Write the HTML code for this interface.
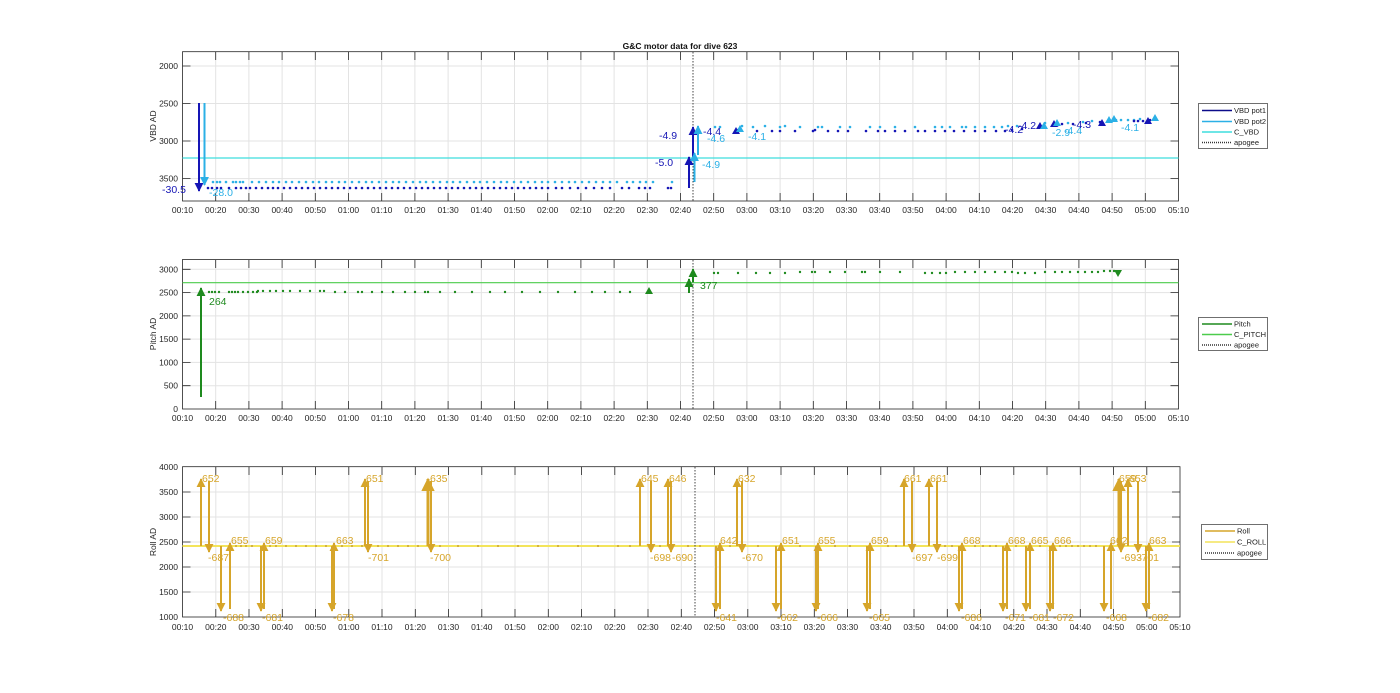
<!DOCTYPE html>
<html><head><meta charset="utf-8"><style>
html,body{margin:0;padding:0;background:#fff;width:1400px;height:693px;overflow:hidden}
svg{display:block;font-family:"Liberation Sans",Arial,sans-serif}
.tk{font-size:8.5px;fill:#262626}
.g{stroke:#e3e3e3;stroke-width:1}
.ax{fill:none;stroke:#262626;stroke-width:0.8}
.r{font-size:10.5px;fill:#d6a52a}
</style></head><body>
<svg width="1400" height="693" viewBox="0 0 1400 693" xmlns="http://www.w3.org/2000/svg">
<defs>
<marker id="mDB" viewBox="0 0 10 10" refX="9" refY="5" markerWidth="4.5" markerHeight="4.5" orient="auto"><path d="M0,0L10,5L0,10z" fill="#1515b5"/></marker>
<marker id="mLB" viewBox="0 0 10 10" refX="9" refY="5" markerWidth="4.5" markerHeight="4.5" orient="auto"><path d="M0,0L10,5L0,10z" fill="#2bb0e6"/></marker>
<marker id="mG" viewBox="0 0 10 10" refX="9" refY="5" markerWidth="4.5" markerHeight="4.5" orient="auto"><path d="M0,0L10,5L0,10z" fill="#1e8a1e"/></marker>
<marker id="mR" viewBox="0 0 10 10" refX="9" refY="5" markerWidth="4.5" markerHeight="4.5" orient="auto"><path d="M0,0L10,5L0,10z" fill="#d6a52a"/></marker>
</defs>

<text x="680" y="49" text-anchor="middle" font-size="8.5" font-weight="bold" fill="#111">G&amp;C motor data for dive 623</text>
<g class="g">
<path d="M215.7 52V201M248.9 52V201M282.1 52V201M315.3 52V201M348.5 52V201M381.7 52V201M414.9 52V201M448.1 52V201M481.3 52V201M514.5 52V201M547.7 52V201M580.9 52V201M614.1 52V201M647.3 52V201M680.5 52V201M713.7 52V201M746.9 52V201M780.1 52V201M813.3 52V201M846.5 52V201M879.7 52V201M912.9 52V201M946.1 52V201M979.3 52V201M1012.5 52V201M1045.7 52V201M1078.9 52V201M1112.1 52V201M1145.3 52V201"/>
<path d="M182.5 66H1178.5M182.5 103.5H1178.5M182.5 141H1178.5M182.5 178.6H1178.5"/>
</g>
<rect class="ax" x="182.5" y="51.7" width="996" height="149.3"/>
<g stroke="#262626" stroke-width="0.8">
<path d="M182.5 66h8M182.5 103.5h8M182.5 141h8M182.5 178.6h8M1178.5 66h-8M1178.5 103.5h-8M1178.5 141h-8M1178.5 178.6h-8"/>
<path d="M215.7 201v-8M248.9 201v-8M282.1 201v-8M315.3 201v-8M348.5 201v-8M381.7 201v-8M414.9 201v-8M448.1 201v-8M481.3 201v-8M514.5 201v-8M547.7 201v-8M580.9 201v-8M614.1 201v-8M647.3 201v-8M680.5 201v-8M713.7 201v-8M746.9 201v-8M780.1 201v-8M813.3 201v-8M846.5 201v-8M879.7 201v-8M912.9 201v-8M946.1 201v-8M979.3 201v-8M1012.5 201v-8M1045.7 201v-8M1078.9 201v-8M1112.1 201v-8M1145.3 201v-8"/>
<path d="M215.7 52v8M248.9 52v8M282.1 52v8M315.3 52v8M348.5 52v8M381.7 52v8M414.9 52v8M448.1 52v8M481.3 52v8M514.5 52v8M547.7 52v8M580.9 52v8M614.1 52v8M647.3 52v8M680.5 52v8M713.7 52v8M746.9 52v8M780.1 52v8M813.3 52v8M846.5 52v8M879.7 52v8M912.9 52v8M946.1 52v8M979.3 52v8M1012.5 52v8M1045.7 52v8M1078.9 52v8M1112.1 52v8M1145.3 52v8"/>
</g>
<g class="tk" text-anchor="end"><text x="178" y="69">2000</text><text x="178" y="106.5">2500</text><text x="178" y="144">3000</text><text x="178" y="181.6">3500</text></g>
<text class="tk" transform="translate(156,126) rotate(-90)" text-anchor="middle">VBD AD</text>
<g class="tk" text-anchor="middle">
<text x="182.5" y="213">00:10</text><text x="215.7" y="213">00:20</text><text x="248.9" y="213">00:30</text><text x="282.1" y="213">00:40</text><text x="315.3" y="213">00:50</text><text x="348.5" y="213">01:00</text><text x="381.7" y="213">01:10</text><text x="414.9" y="213">01:20</text><text x="448.1" y="213">01:30</text><text x="481.3" y="213">01:40</text><text x="514.5" y="213">01:50</text><text x="547.7" y="213">02:00</text><text x="580.9" y="213">02:10</text><text x="614.1" y="213">02:20</text><text x="647.3" y="213">02:30</text><text x="680.5" y="213">02:40</text><text x="713.7" y="213">02:50</text><text x="746.9" y="213">03:00</text><text x="780.1" y="213">03:10</text><text x="813.3" y="213">03:20</text><text x="846.5" y="213">03:30</text><text x="879.7" y="213">03:40</text><text x="912.9" y="213">03:50</text><text x="946.1" y="213">04:00</text><text x="979.3" y="213">04:10</text><text x="1012.5" y="213">04:20</text><text x="1045.7" y="213">04:30</text><text x="1078.9" y="213">04:40</text><text x="1112.1" y="213">04:50</text><text x="1145.3" y="213">05:00</text><text x="1178.5" y="213">05:10</text>
</g>
<line x1="182.5" y1="158" x2="1178.5" y2="158" stroke="#3fdede" stroke-width="1.2"/>
<line x1="693" y1="52" x2="693" y2="201" stroke="#444" stroke-width="1" stroke-dasharray="1.5,1.5"/>
<path stroke="#2bb0e6" stroke-width="2.6" stroke-linecap="round" fill="none" d="M213 182h0M217 182h0M220 182h0M226 182h0M233 182h0M236 182h0M240 182h0M243 182h0M252 182h0M259 182h0M266 182h0M273 182h0M279 182h0M286 182h0M292 182h0M299 182h0M306 182h0M313 182h0M319 182h0M326 182h0M332 182h0M339 182h0M345 182h0M352 182h0M359 182h0M366 182h0M372 182h0M379 182h0M386 182h0M393 182h0M399 182h0M406 182h0M413 182h0M420 182h0M426 182h0M433 182h0M440 182h0M447 182h0M453 182h0M460 182h0M467 182h0M474 182h0M480 182h0M487 182h0M494 182h0M501 182h0M507 182h0M514 182h0M521 182h0M528 182h0M535 182h0M542 182h0M548 182h0M555 182h0M562 182h0M569 182h0M575 182h0M582 182h0M589 182h0M596 182h0M603 182h0M610 182h0M617 182h0M627 182h0M633 182h0M640 182h0M646 182h0M653 182h0M672 182h0M715 127h0M720 127h0M742 126h0M753 127h0M765 126h0M780 127h0M785 126h0M800 127h0M818 127h0M822 127h0M840 127h0M850 127h0M870 127h0M880 127h0M895 127h0M915 127h0M935 127h0M942 127h0M950 127h0M962 127h0M966 127h0M975 127h0M985 127h0M994 127h0M1002 127h0M1008 126h0M1017 126h0M1045 123h0M1068 123h0M1083 122h0M1092 121h0M1116 120h0M1121 120h0M1128 120h0M1134 120h0M1140 119h0"/>
<path stroke="#1515b5" stroke-width="2.6" stroke-linecap="round" fill="none" d="M208 188h0M212 188h0M217 188h0M221 188h0M229 188h0M236 188h0M241 188h0M246 188h0M250 188h0M256 188h0M262 188h0M268 188h0M273 188h0M278 188h0M284 188h0M290 188h0M296 188h0M302 188h0M308 188h0M314 188h0M320 188h0M326 188h0M332 188h0M338 188h0M344 188h0M350 188h0M356 188h0M362 188h0M368 188h0M374 188h0M380 188h0M386 188h0M392 188h0M398 188h0M404 188h0M410 188h0M416 188h0M422 188h0M428 188h0M434 188h0M440 188h0M446 188h0M452 188h0M458 188h0M464 188h0M470 188h0M476 188h0M482 188h0M488 188h0M494 188h0M500 188h0M506 188h0M512 188h0M518 188h0M524 188h0M530 188h0M536 188h0M542 188h0M548 188h0M556 188h0M562 188h0M570 188h0M578 188h0M586 188h0M594 188h0M602 188h0M610 188h0M622 188h0M629 188h0M639 188h0M645 188h0M650 188h0M668 188h0M671 188h0M738 130h0M757 131h0M772 131h0M780 131h0M795 131h0M813 131h0M815 130h0M828 131h0M838 131h0M848 131h0M866 131h0M878 131h0M885 131h0M895 131h0M905 131h0M918 131h0M925 131h0M935 131h0M945 131h0M954 131h0M964 131h0M975 131h0M985 131h0M996 131h0M1005 131h0M1012 130h0M1022 129h0M1058 125h0M1062 124h0M1073 124h0M1086 123h0M1100 122h0M1134 121h0M1138 121h0M1143 121h0M1150 120h0"/>
<g fill="none" stroke-width="2">
<line x1="199" y1="103" x2="199" y2="191" stroke="#1515b5" marker-end="url(#mDB)"/>
<line x1="204.5" y1="103" x2="204.5" y2="185" stroke="#2bb0e6" marker-end="url(#mLB)"/>
<line x1="689" y1="188" x2="689" y2="157" stroke="#1515b5" marker-end="url(#mDB)"/>
<line x1="693" y1="160" x2="693" y2="127" stroke="#1515b5" marker-end="url(#mDB)"/>
<line x1="694.5" y1="182" x2="694.5" y2="153" stroke="#2bb0e6" marker-end="url(#mLB)"/>
<line x1="698" y1="155" x2="698" y2="126" stroke="#2bb0e6" marker-end="url(#mLB)"/>
</g>
<g>
<path fill="#1515b5" d="M732 134l4-7 4 7zM1036 129l4-7 4 7zM1050 127l4-7 4 7zM1098 126l4-7 4 7zM1144 124l4-7 4 7z"/>
<path fill="#2bb0e6" d="M736 132l4-7 4 7zM1040 129l4-7 4 7zM1053 126l4-7 4 7zM1105 123l4-7 4 7zM1110 122l4-7 4 7zM1151 121l4-7 4 7z"/>
</g>
<g font-size="10.5">
<text x="162" y="193" fill="#1515b5">-30.5</text>
<text x="209" y="196" fill="#2bb0e6">-28.0</text>
<text x="655" y="166" fill="#1515b5">-5.0</text>
<text x="659" y="139" fill="#1515b5">-4.9</text>
<text x="703" y="135" fill="#1515b5">-4.4</text>
<text x="707" y="142" fill="#2bb0e6">-4.6</text>
<text x="702" y="168" fill="#2bb0e6">-4.9</text>
<text x="748" y="140" fill="#2bb0e6">-4.1</text>
<text x="1005" y="133" fill="#1515b5">-4.2</text>
<text x="1018" y="129" fill="#1515b5">-4.2</text>
<text x="1052" y="136" fill="#2bb0e6">-2.9</text>
<text x="1064" y="134" fill="#2bb0e6">-4.4</text>
<text x="1073" y="128" fill="#1515b5">-4.3</text>
<text x="1121" y="131" fill="#2bb0e6">-4.1</text>
</g>
<rect x="1198.5" y="103.5" width="69" height="45" fill="#fff" stroke="#333" stroke-width="0.7"/>
<g stroke-width="1.4"><line x1="1202" y1="110.5" x2="1232" y2="110.5" stroke="#0c0c8a"/><line x1="1202" y1="121.5" x2="1232" y2="121.5" stroke="#2bb0e6"/><line x1="1202" y1="132" x2="1232" y2="132" stroke="#3fdede"/><line x1="1202" y1="142.5" x2="1232" y2="142.5" stroke="#333" stroke-dasharray="1,1"/></g>
<g font-size="7.5" fill="#222"><text x="1234" y="113">VBD pot1</text><text x="1234" y="124">VBD pot2</text><text x="1234" y="134.5">C_VBD</text><text x="1234" y="145">apogee</text></g>

<g class="g">
<path d="M215.7 260V409M248.9 260V409M282.1 260V409M315.3 260V409M348.5 260V409M381.7 260V409M414.9 260V409M448.1 260V409M481.3 260V409M514.5 260V409M547.7 260V409M580.9 260V409M614.1 260V409M647.3 260V409M680.5 260V409M713.7 260V409M746.9 260V409M780.1 260V409M813.3 260V409M846.5 260V409M879.7 260V409M912.9 260V409M946.1 260V409M979.3 260V409M1012.5 260V409M1045.7 260V409M1078.9 260V409M1112.1 260V409M1145.3 260V409"/>
<path d="M182.5 269.3H1178.5M182.5 292.6H1178.5M182.5 315.9H1178.5M182.5 339.1H1178.5M182.5 362.4H1178.5M182.5 385.7H1178.5"/>
</g>
<rect class="ax" x="182.5" y="259.5" width="996" height="149.5"/>
<g stroke="#262626" stroke-width="0.8">
<path d="M182.5 269.3h8M182.5 292.6h8M182.5 315.9h8M182.5 339.1h8M182.5 362.4h8M182.5 385.7h8M1178.5 269.3h-8M1178.5 292.6h-8M1178.5 315.9h-8M1178.5 339.1h-8M1178.5 362.4h-8M1178.5 385.7h-8"/>
<path d="M215.7 409v-8M248.9 409v-8M282.1 409v-8M315.3 409v-8M348.5 409v-8M381.7 409v-8M414.9 409v-8M448.1 409v-8M481.3 409v-8M514.5 409v-8M547.7 409v-8M580.9 409v-8M614.1 409v-8M647.3 409v-8M680.5 409v-8M713.7 409v-8M746.9 409v-8M780.1 409v-8M813.3 409v-8M846.5 409v-8M879.7 409v-8M912.9 409v-8M946.1 409v-8M979.3 409v-8M1012.5 409v-8M1045.7 409v-8M1078.9 409v-8M1112.1 409v-8M1145.3 409v-8"/>
<path d="M215.7 260v8M248.9 260v8M282.1 260v8M315.3 260v8M348.5 260v8M381.7 260v8M414.9 260v8M448.1 260v8M481.3 260v8M514.5 260v8M547.7 260v8M580.9 260v8M614.1 260v8M647.3 260v8M680.5 260v8M713.7 260v8M746.9 260v8M780.1 260v8M813.3 260v8M846.5 260v8M879.7 260v8M912.9 260v8M946.1 260v8M979.3 260v8M1012.5 260v8M1045.7 260v8M1078.9 260v8M1112.1 260v8M1145.3 260v8"/>
</g>
<g class="tk" text-anchor="end"><text x="178" y="272.3">3000</text><text x="178" y="295.6">2500</text><text x="178" y="318.9">2000</text><text x="178" y="342.1">1500</text><text x="178" y="365.4">1000</text><text x="178" y="388.7">500</text><text x="178" y="412">0</text></g>
<text class="tk" transform="translate(156,334) rotate(-90)" text-anchor="middle">Pitch AD</text>
<g class="tk" text-anchor="middle">
<text x="182.5" y="421">00:10</text><text x="215.7" y="421">00:20</text><text x="248.9" y="421">00:30</text><text x="282.1" y="421">00:40</text><text x="315.3" y="421">00:50</text><text x="348.5" y="421">01:00</text><text x="381.7" y="421">01:10</text><text x="414.9" y="421">01:20</text><text x="448.1" y="421">01:30</text><text x="481.3" y="421">01:40</text><text x="514.5" y="421">01:50</text><text x="547.7" y="421">02:00</text><text x="580.9" y="421">02:10</text><text x="614.1" y="421">02:20</text><text x="647.3" y="421">02:30</text><text x="680.5" y="421">02:40</text><text x="713.7" y="421">02:50</text><text x="746.9" y="421">03:00</text><text x="780.1" y="421">03:10</text><text x="813.3" y="421">03:20</text><text x="846.5" y="421">03:30</text><text x="879.7" y="421">03:40</text><text x="912.9" y="421">03:50</text><text x="946.1" y="421">04:00</text><text x="979.3" y="421">04:10</text><text x="1012.5" y="421">04:20</text><text x="1045.7" y="421">04:30</text><text x="1078.9" y="421">04:40</text><text x="1112.1" y="421">04:50</text><text x="1145.3" y="421">05:00</text><text x="1178.5" y="421">05:10</text>
</g>
<line x1="182.5" y1="282.7" x2="1178.5" y2="282.7" stroke="#4ccc4c" stroke-width="1.2"/>
<line x1="693" y1="260" x2="693" y2="409" stroke="#444" stroke-width="1" stroke-dasharray="1.5,1.5"/>
<path stroke="#1e8a1e" stroke-width="2.4" stroke-linecap="round" fill="none" d="M209 292h0M212 292h0M215 292h0M219 292h0M229 292h0M232 292h0M235 292h0M238 292h0M243 292h0M248 292h0M253 292h0M257 292h0M258 291h0M263 291h0M270 291h0M276 291h0M283 291h0M290 291h0M300 291h0M310 291h0M320 291h0M324 291h0M335 292h0M345 292h0M358 292h0M362 292h0M372 292h0M382 292h0M393 292h0M405 292h0M415 292h0M425 292h0M428 292h0M440 292h0M455 292h0M472 292h0M490 292h0M505 292h0M522 292h0M540 292h0M558 292h0M575 292h0M592 292h0M605 292h0M620 292h0M630 292h0M714 273h0M718 273h0M738 273h0M756 273h0M770 273h0M785 273h0M800 272h0M812 272h0M815 272h0M830 272h0M845 272h0M862 272h0M865 272h0M880 272h0M900 272h0M925 273h0M932 273h0M940 273h0M946 273h0M955 272h0M965 272h0M975 272h0M985 272h0M995 272h0M1005 272h0M1012 272h0M1018 273h0M1025 273h0M1035 273h0M1045 272h0M1055 272h0M1062 272h0M1070 272h0M1078 272h0M1085 272h0M1092 272h0M1098 272h0M1104 271h0M1110 271h0M1114 271h0"/>
<g fill="none" stroke="#1e8a1e" stroke-width="2">
<line x1="201" y1="397" x2="201" y2="288" marker-end="url(#mG)"/>
<line x1="689" y1="293" x2="689" y2="279" marker-end="url(#mG)"/>
<line x1="693" y1="282" x2="693" y2="269" marker-end="url(#mG)"/>
</g>
<path fill="#1e8a1e" d="M645 294l4-7 4 7zM1114 270l4 7 4-7z"/>
<text x="209" y="305" font-size="10.5" fill="#1e8a1e">264</text>
<text x="700" y="289" font-size="10.5" fill="#1e8a1e">377</text>
<rect x="1198.5" y="317.5" width="69" height="33" fill="#fff" stroke="#333" stroke-width="0.7"/>
<g stroke-width="1.4"><line x1="1202" y1="324" x2="1232" y2="324" stroke="#1e8a1e"/><line x1="1202" y1="334.5" x2="1232" y2="334.5" stroke="#4ccc4c"/><line x1="1202" y1="345" x2="1232" y2="345" stroke="#333" stroke-dasharray="1,1"/></g>
<g font-size="7.5" fill="#222"><text x="1234" y="326.5">Pitch</text><text x="1234" y="337">C_PITCH</text><text x="1234" y="347.5">apogee</text></g>

<g class="g">
<path d="M215.8 467V617M249 467V617M282.3 467V617M315.5 467V617M348.8 467V617M382 467V617M415.3 467V617M448.5 467V617M481.8 467V617M515 467V617M548.3 467V617M581.5 467V617M614.8 467V617M648 467V617M681.3 467V617M714.5 467V617M747.8 467V617M781 467V617M814.3 467V617M847.5 467V617M880.8 467V617M914 467V617M947.3 467V617M980.5 467V617M1013.8 467V617M1047 467V617M1080.3 467V617M1113.5 467V617M1146.8 467V617"/>
<path d="M182.5 492H1180M182.5 517H1180M182.5 542H1180M182.5 567H1180M182.5 592H1180"/>
</g>
<rect class="ax" x="182.5" y="466.7" width="997.5" height="150.3"/>
<g stroke="#262626" stroke-width="0.8">
<path d="M182.5 492h8M182.5 517h8M182.5 542h8M182.5 567h8M182.5 592h8M1180 492h-8M1180 517h-8M1180 542h-8M1180 567h-8M1180 592h-8"/>
<path d="M215.8 617v-8M249 617v-8M282.3 617v-8M315.5 617v-8M348.8 617v-8M382 617v-8M415.3 617v-8M448.5 617v-8M481.8 617v-8M515 617v-8M548.3 617v-8M581.5 617v-8M614.8 617v-8M648 617v-8M681.3 617v-8M714.5 617v-8M747.8 617v-8M781 617v-8M814.3 617v-8M847.5 617v-8M880.8 617v-8M914 617v-8M947.3 617v-8M980.5 617v-8M1013.8 617v-8M1047 617v-8M1080.3 617v-8M1113.5 617v-8M1146.8 617v-8"/>
<path d="M215.8 467v8M249 467v8M282.3 467v8M315.5 467v8M348.8 467v8M382 467v8M415.3 467v8M448.5 467v8M481.8 467v8M515 467v8M548.3 467v8M581.5 467v8M614.8 467v8M648 467v8M681.3 467v8M714.5 467v8M747.8 467v8M781 467v8M814.3 467v8M847.5 467v8M880.8 467v8M914 467v8M947.3 467v8M980.5 467v8M1013.8 467v8M1047 467v8M1080.3 467v8M1113.5 467v8M1146.8 467v8"/>
</g>
<g class="tk" text-anchor="end"><text x="178" y="470">4000</text><text x="178" y="495">3500</text><text x="178" y="520">3000</text><text x="178" y="545">2500</text><text x="178" y="570">2000</text><text x="178" y="595">1500</text><text x="178" y="620">1000</text></g>
<text class="tk" transform="translate(156,542) rotate(-90)" text-anchor="middle">Roll AD</text>
<g class="tk" text-anchor="middle">
<text x="182.5" y="630">00:10</text><text x="215.8" y="630">00:20</text><text x="249" y="630">00:30</text><text x="282.3" y="630">00:40</text><text x="315.5" y="630">00:50</text><text x="348.8" y="630">01:00</text><text x="382" y="630">01:10</text><text x="415.3" y="630">01:20</text><text x="448.5" y="630">01:30</text><text x="481.8" y="630">01:40</text><text x="515" y="630">01:50</text><text x="548.3" y="630">02:00</text><text x="581.5" y="630">02:10</text><text x="614.8" y="630">02:20</text><text x="648" y="630">02:30</text><text x="681.3" y="630">02:40</text><text x="714.5" y="630">02:50</text><text x="747.8" y="630">03:00</text><text x="781" y="630">03:10</text><text x="814.3" y="630">03:20</text><text x="847.5" y="630">03:30</text><text x="880.8" y="630">03:40</text><text x="914" y="630">03:50</text><text x="947.3" y="630">04:00</text><text x="980.5" y="630">04:10</text><text x="1013.8" y="630">04:20</text><text x="1047" y="630">04:30</text><text x="1080.3" y="630">04:40</text><text x="1113.5" y="630">04:50</text><text x="1146.8" y="630">05:00</text><text x="1180" y="630">05:10</text>
</g>
<line x1="182.5" y1="546" x2="1180" y2="546" stroke="#f3e45a" stroke-width="2"/>
<line x1="695" y1="467" x2="695" y2="617" stroke="#444" stroke-width="1" stroke-dasharray="1.5,1.5"/>
<path stroke="#c9a03a" stroke-width="2" stroke-linecap="round" fill="none" d="M236 546h0M241 546h0M246 546h0M252 546h0M270 546h0M276 546h0M286 546h0M296 546h0M306 546h0M316 546h0M326 546h0M342 546h0M352 546h0M362 546h0M378 546h0M388 546h0M398 546h0M408 546h0M418 546h0M440 546h0M458 546h0M478 546h0M498 546h0M518 546h0M538 546h0M558 546h0M578 546h0M598 546h0M618 546h0M630 546h0M660 546h0M688 546h0M700 546h0M730 546h0M758 546h0M800 546h0M835 546h0M850 546h0M888 546h0M896 546h0M945 546h0M952 546h0M975 546h0M983 546h0M990 546h0M996 546h0M1016 546h0M1040 546h0M1060 546h0M1066 546h0M1072 546h0M1078 546h0M1084 546h0M1090 546h0M1096 546h0"/>
<g fill="none" stroke="#d6a52a" stroke-width="2" marker-end="url(#mR)">
<line x1="201" y1="546" x2="201" y2="479"/><line x1="209" y1="481" x2="209" y2="552"/>
<line x1="221" y1="546" x2="221" y2="611"/><line x1="230" y1="609" x2="230" y2="543"/>
<line x1="261" y1="546" x2="261" y2="611"/><line x1="264" y1="609" x2="264" y2="543"/>
<line x1="332" y1="546" x2="332" y2="611"/><line x1="334" y1="609" x2="334" y2="543"/>
<line x1="365" y1="546" x2="365" y2="479"/><line x1="368" y1="481" x2="368" y2="552"/>
<line x1="428" y1="546" x2="428" y2="479" stroke-width="3"/><line x1="431" y1="481" x2="431" y2="552"/>
<line x1="640" y1="546" x2="640" y2="479"/><line x1="651" y1="481" x2="651" y2="552"/>
<line x1="668" y1="546" x2="668" y2="479"/><line x1="671" y1="481" x2="671" y2="552"/>
<line x1="716" y1="546" x2="716" y2="611"/><line x1="720" y1="609" x2="720" y2="543"/>
<line x1="737" y1="546" x2="737" y2="479"/><line x1="742" y1="481" x2="742" y2="552"/>
<line x1="776" y1="546" x2="776" y2="611"/><line x1="781" y1="609" x2="781" y2="543"/>
<line x1="816" y1="546" x2="816" y2="611"/><line x1="818" y1="609" x2="818" y2="543"/>
<line x1="867" y1="546" x2="867" y2="611"/><line x1="870" y1="609" x2="870" y2="543"/>
<line x1="904" y1="546" x2="904" y2="479"/><line x1="912" y1="481" x2="912" y2="552"/>
<line x1="929" y1="546" x2="929" y2="479"/><line x1="937" y1="481" x2="937" y2="552"/>
<line x1="959" y1="546" x2="959" y2="611"/><line x1="962" y1="609" x2="962" y2="543"/>
<line x1="1003" y1="546" x2="1003" y2="611"/><line x1="1007" y1="609" x2="1007" y2="543"/>
<line x1="1026" y1="546" x2="1026" y2="611"/><line x1="1030" y1="609" x2="1030" y2="543"/>
<line x1="1050" y1="546" x2="1050" y2="611"/><line x1="1053" y1="609" x2="1053" y2="543"/>
<line x1="1104" y1="546" x2="1104" y2="611"/><line x1="1111" y1="609" x2="1111" y2="543"/>
<line x1="1119" y1="546" x2="1119" y2="479" stroke-width="3"/><line x1="1121" y1="481" x2="1121" y2="552"/>
<line x1="1128" y1="546" x2="1128" y2="479"/><line x1="1138" y1="481" x2="1138" y2="552"/>
<line x1="1146" y1="546" x2="1146" y2="611"/><line x1="1149" y1="609" x2="1149" y2="543"/>
</g>
<g class="r">
<text x="202" y="482">652</text><text x="208" y="561">-687</text>
<text x="223" y="621">-688</text><text x="231" y="544">655</text>
<text x="262" y="621">-681</text><text x="265" y="544">659</text>
<text x="333" y="621">-678</text><text x="336" y="544">663</text>
<text x="366" y="482">651</text><text x="368" y="561">-701</text>
<text x="430" y="482">635</text><text x="430" y="561">-700</text>
<text x="641" y="482">645</text><text x="650" y="561">-698</text>
<text x="669" y="482">646</text><text x="672" y="561">-690</text>
<text x="716" y="621">-641</text><text x="720" y="544">642</text>
<text x="738" y="482">632</text><text x="742" y="561">-670</text>
<text x="777" y="621">-662</text><text x="782" y="544">651</text>
<text x="817" y="621">-666</text><text x="818" y="544">655</text>
<text x="869" y="621">-665</text><text x="871" y="544">659</text>
<text x="904" y="482">661</text><text x="912" y="561">-697</text>
<text x="930" y="482">661</text><text x="937" y="561">-699</text>
<text x="961" y="621">-686</text><text x="963" y="544">668</text>
<text x="1005" y="621">-671</text><text x="1008" y="544">668</text>
<text x="1029" y="621">-681</text><text x="1031" y="544">665</text>
<text x="1053" y="621">-672</text><text x="1054" y="544">666</text>
<text x="1106" y="621">-668</text><text x="1110" y="544">662</text>
<text x="1119" y="482">659</text><text x="1129" y="482">653</text>
<text x="1121" y="561">-693</text><text x="1138" y="561">-701</text>
<text x="1148" y="621">-682</text><text x="1149" y="544">663</text>
</g>
<rect x="1201.5" y="524.5" width="66" height="35" fill="#fff" stroke="#333" stroke-width="0.7"/>
<g stroke-width="1.4"><line x1="1205" y1="531" x2="1235" y2="531" stroke="#d6a52a"/><line x1="1205" y1="542" x2="1235" y2="542" stroke="#f3e45a"/><line x1="1205" y1="553" x2="1235" y2="553" stroke="#333" stroke-dasharray="1,1"/></g>
<g font-size="7.5" fill="#222"><text x="1237" y="533.5">Roll</text><text x="1237" y="544.5">C_ROLL</text><text x="1237" y="555.5">apogee</text></g>
</svg>
</body></html>
